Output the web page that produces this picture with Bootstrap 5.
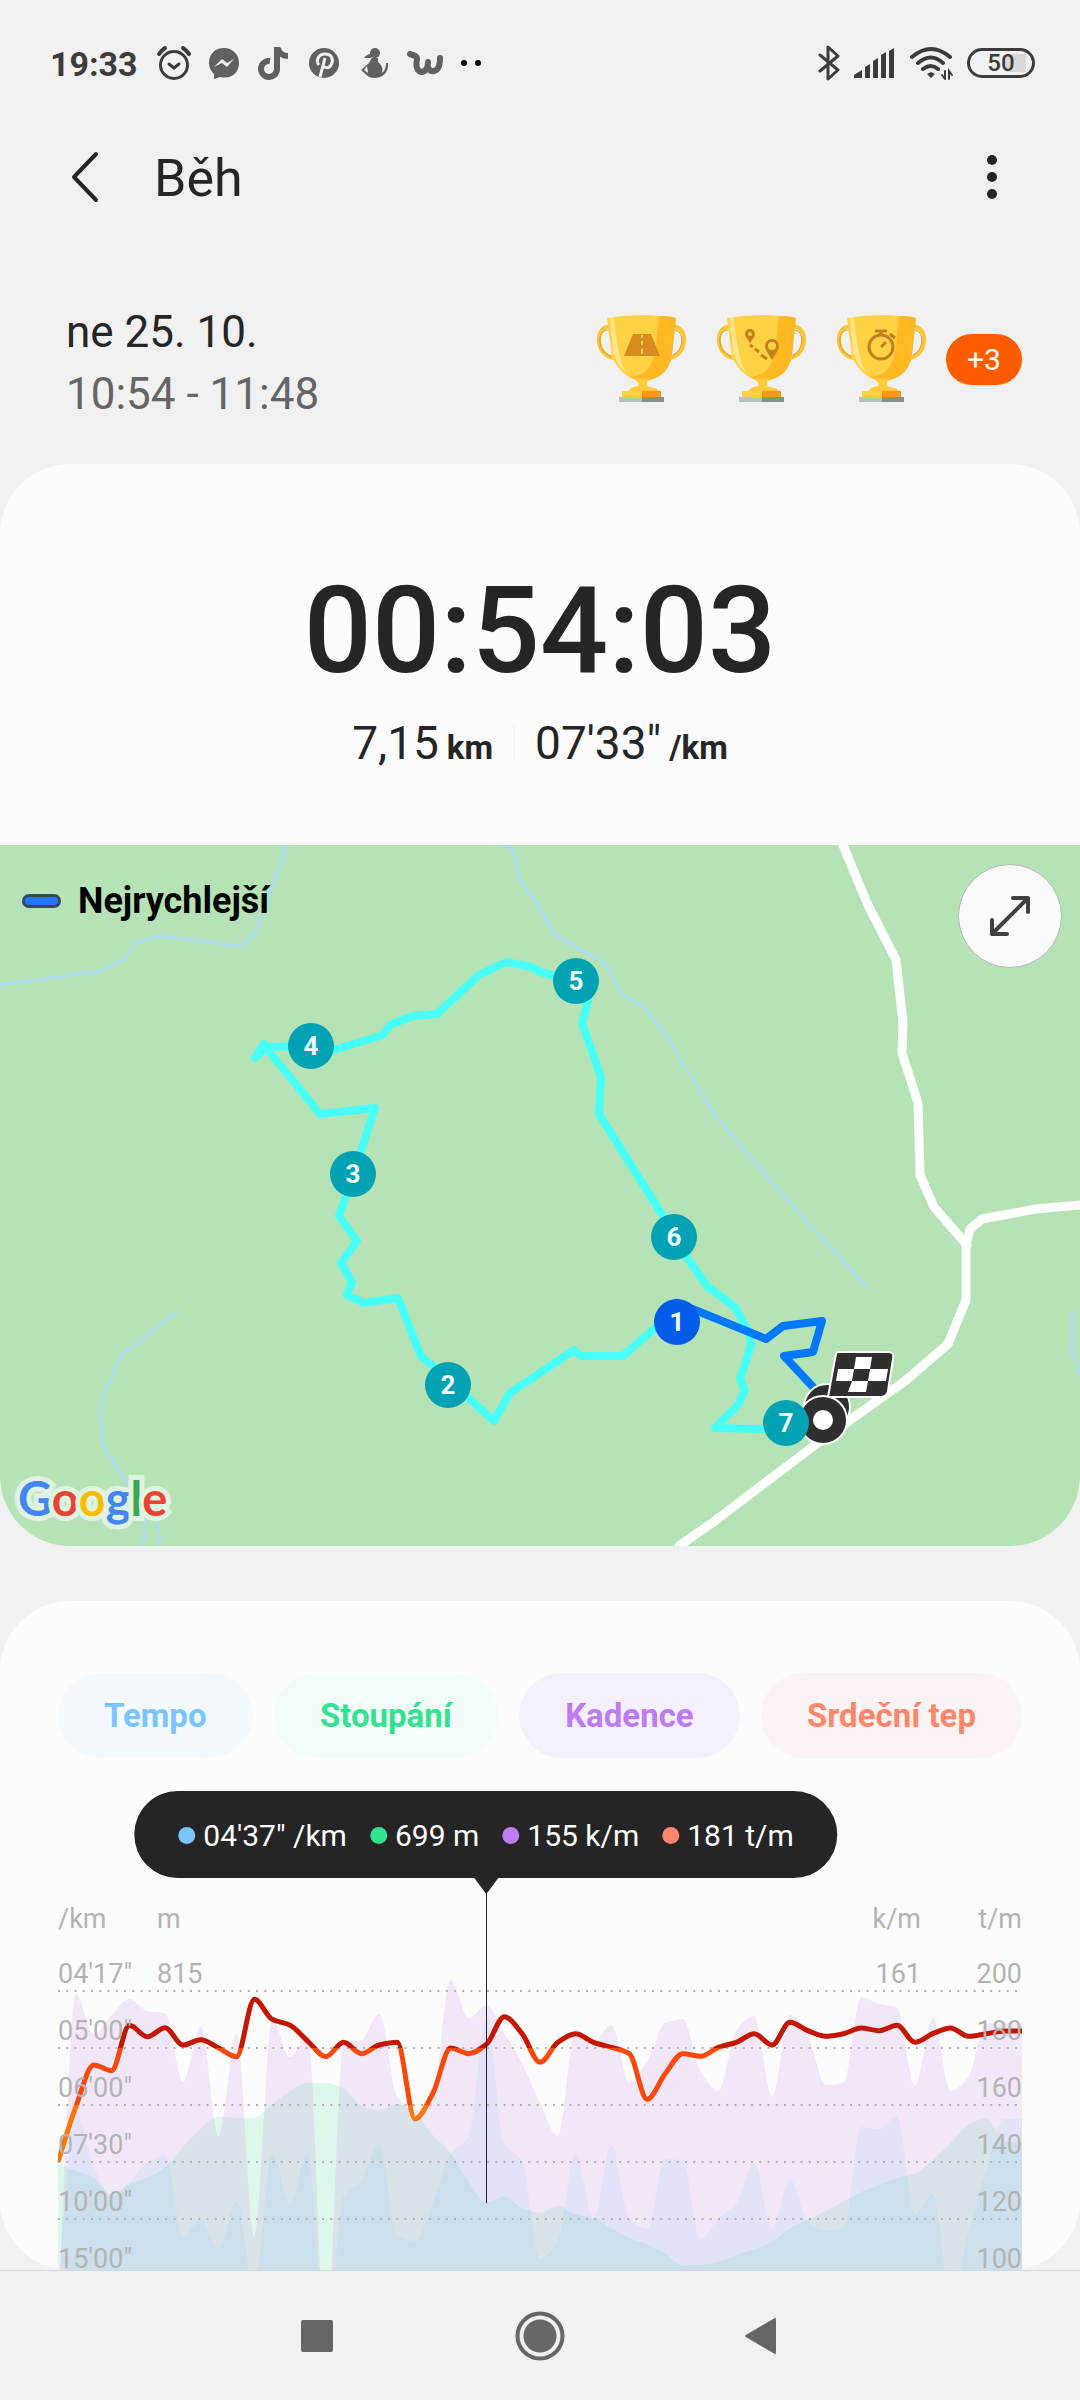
<!DOCTYPE html>
<html lang="cs">
<head>
<meta charset="utf-8">
<meta name="viewport" content="width=device-width, initial-scale=1">
<title>Běh</title>
<link href="https://cdn.jsdelivr.net/npm/bootstrap@5.3.0/dist/css/bootstrap.min.css" rel="stylesheet">
<style>
  body { background: #f1f1f1; color: #252525; font-family: Roboto, "Noto Sans", sans-serif; }
  svg { display: block; }
  .status-bar { height: 126px; padding: 0 45px 0 50px; color: #3c3c3c; }
  .clock { font-size: 34px; font-weight: 700; line-height: 40px; padding: 2px 2px 0 0; color: #3c3c3c; }
  .notif { color: #606060; }
  .signals { gap: 14px; }
  .battery { width: 68px; height: 30px; border: 3px solid #3c3c3c; border-radius: 15px; font-size: 24px; line-height: 24px; font-weight: 500;
    background: linear-gradient(#d9d9d9, #d9d9d9) 36px center / 20px 18px no-repeat; }
  .app-bar { height: 102px; padding: 0 64px; }
  .app-bar h1 { font-size: 52px; line-height: 60px; font-weight: 400; padding: 4px 0 0 46px; }
  .bare { border: 0; background: none; padding: 0; }
  .summary { padding: 69px 58px 43px 66px; font-size: 44px; line-height: 62px; }
  .when { padding-top: 4px; margin-bottom: -4px; }
  .hours { color: #656565; }
  .trophies { gap: 28px; }
  .more-badge { width: 76px; height: 51px; margin-left: -10px; background: #ff5c00; font-size: 30px; font-weight: 400; line-height: 51px; padding: 0; border-radius: 26px; }
  .panel { background: #fcfcfc; border-radius: 70px; overflow: hidden; }
  .result { padding: 107px 0 72px; }
  .timer { font-size: 120px; line-height: 120px; font-weight: 500; }
  .stats { height: 60px; margin-top: 22px; font-size: 46px; line-height: 60px; }
  .stats b { font-size: 33px; line-height: 40px; }
  .rule { width: 2px; height: 36px; margin: 0 20px; background: #f4f4f4; }
  .map-box { background: #b5e3b5; }
  .legend { left: 22px; top: 34px; font-size: 36px; line-height: 44px; font-weight: 700; color: #000; gap: 17px; }
  .legend i { width: 39px; height: 14px; border: 3px solid #35485c; border-radius: 7px; background: #2474ff; }
  .expand { right: 18px; top: 19px; width: 104px; height: 104px; border: 1px solid #b4b8b4; background: #fafafa; }
  .logo { left: 18px; bottom: 18px; font: 700 47px/60px Lato, sans-serif; -webkit-text-stroke: 10px #e0f3e0; paint-order: stroke fill; }
  .pins text { font: 700 26px Roboto, sans-serif; fill: #f2ffff; text-anchor: middle; }
  .details { margin-top: 55px; padding: 72px 58px 0; }
  .chip { height: 85px; border: 0; border-radius: 43px; padding: 0 46px; font-size: 33px; font-weight: 700; }
  .c-tempo { color: #7ac4ff; background: #f4f9fe; }
  .c-climb { color: #31e291; background: #f2fdf9; }
  .c-cadence { color: #bf7cf2; background: #f5f1fc; }
  .c-heart { color: #ff866b; background: #fcf4f4; }
  .chart-box { margin-top: 33px; padding-top: 113px; color: #b3b3b3; font-size: 27px; line-height: 30px; }
  .tip { left: 44.4%; top: 0; transform: translateX(-50%); height: 87px; padding: 2px 44px 0; gap: 23px; border-radius: 44px; background: #252525; color: #fff; font-size: 30px; white-space: nowrap; }
  .tip span { display: flex; align-items: center; gap: 8px; }
  .tip i { width: 17px; height: 17px; border-radius: 50%; background: currentColor; }
  .tip em { font-style: normal; color: #fff; }
  .tip::after { content: ""; position: absolute; left: 50%; top: 100%; margin-left: -12px; border: solid transparent; border-width: 16px 12px 0; border-top-color: #252525; }
  .cursor { left: 44.4%; top: 87px; width: 1px; height: 325px; background: #252525; }
  .unit-a { width: 99px; }
  .unit-b { width: 101px; }
  .plot { display: grid; height: 336px; overflow: hidden; }
  .plot > * { grid-area: 1 / 1; min-width: 0; }
  .axis > div { height: 57px; line-height: 34px; display: flex; align-items: flex-end; }
  .axis > div:last-child { height: 51px; line-height: 22px; }
  .sys-nav { height: 130px; border-top: 1px solid #d6d6d6; gap: 159px; color: #666; }
  .sys-nav button { width: 64px; height: 64px; color: inherit; }
</style>
<script src="https://cdn.jsdelivr.net/npm/bootstrap@5.3.0/dist/js/bootstrap.bundle.min.js"></script>
</head>
<body>
<div class="min-vh-100 d-flex flex-column">

<div class="status-bar d-flex align-items-center justify-content-between">
  <div class="d-flex align-items-center gap-3 notif">
    <span class="clock">19:33</span>
    <svg width="36" height="36" viewBox="0 0 36 36" fill="none" stroke="#3c3c3c" stroke-width="3" stroke-linecap="round"><circle cx="18" cy="20" r="13.5"/><path d="M13 19l5 4 5-4"/><path d="M3 9q3-4 6-6M33 9q-3-4-6-6" stroke-width="4"/></svg>
    <svg width="32" height="34" viewBox="0 0 32 34"><path fill="currentColor" d="M16 2C7 2 1 8 1 17c0 5 2 8 5 11v5l6-2c13 3 19-6 19-14C31 8 24 2 16 2z"/><path fill="#f1f1f1" d="M6 21l8-8 5 4 7-4-7 8-5-4z"/></svg>
    <svg width="36" height="36" viewBox="0 0 36 36" fill="none" stroke="currentColor" stroke-width="6"><path d="M21 2v22a8 8 0 1 1-7-8"/><path d="M22 3c1 6 5 8 10 8"/></svg>
    <svg width="32" height="34" viewBox="0 0 32 34"><circle cx="16" cy="17" r="15" fill="currentColor"/><path d="M11 19c-4-5 0-11 6-11 7 0 9 6 6 11-2 4-7 3-8 0M17 12l-5 19" fill="none" stroke="#f1f1f1" stroke-width="3"/></svg>
    <svg width="34" height="34" viewBox="0 0 34 34" fill="currentColor"><circle cx="19" cy="7" r="5"/><path d="M17 11l5 1v4c5 4 5 8 4 11 3-2 4-6 4-10h2c1 9-5 15-14 15-6 0-8-4-13-8l8-7 2-4zM8 12c2-3 6-5 10-4l-3 4zM11 20l-3 4 4 3z" fill-rule="evenodd"/></svg>
    <svg width="38" height="32" viewBox="0 0 38 32" fill="none" stroke="currentColor" stroke-width="6" stroke-linecap="round" stroke-linejoin="round"><path d="M4 7c4 2 7 1 7 5-1 5-1 12 4 13 5 0 7-5 7-10-1 5 1 10 6 9 5-1 6-7 6-13"/></svg>
    <svg width="24" height="8" viewBox="0 0 24 8" fill="#000"><circle cx="4" cy="4" r="3"/><circle cx="18" cy="4" r="3"/></svg>
  </div>
  <div class="d-flex align-items-center signals">
    <svg width="22" height="36" viewBox="0 0 22 36" fill="none" stroke="currentColor" stroke-width="3" stroke-linejoin="round" stroke-linecap="round"><path d="M2 10l18 15-10 9V2l10 9L2 26"/></svg>
    <svg width="41" height="30" viewBox="0 0 41 30" fill="currentColor"><path d="M0 30v-3l8-5v8zM11 30V19l5-3v14zM19 30V13l5-3v20zM27 30V7l5-3v26zM35 30V3l5-3v30z"/></svg>
    <svg width="44" height="34" viewBox="0 0 44 34" fill="none" stroke="currentColor" stroke-width="4" stroke-linecap="round"><path d="M3 11Q22-5 41 11M9 17Q22 6 34 17M14 23q8-6 15 0"/><path d="M22 26l4 2-4 4-4-4z" fill="currentColor" stroke="none"/><path d="M36 25v8m-3-4l3 4M40 33v-8l3 4" stroke-width="2"/></svg>
    <div class="battery d-flex align-items-center justify-content-center">50</div>
  </div>
</div>

<header class="app-bar d-flex align-items-center">
  <button class="bare" aria-label="Zpět"><svg width="44" height="56" viewBox="0 0 44 56" fill="none" stroke="#252525" stroke-width="4" stroke-linecap="round" stroke-linejoin="round"><path d="M32 5L10 28l22 23"/></svg></button>
  <h1 class="mb-0 flex-grow-1">Běh</h1>
  <button class="bare" aria-label="Další možnosti"><svg width="48" height="56" viewBox="0 0 48 56" fill="#252525"><circle cx="24" cy="11" r="5"/><circle cx="24" cy="28" r="5"/><circle cx="24" cy="45" r="5"/></svg></button>
</header>

<section class="summary d-flex align-items-center justify-content-between">
  <div class="when">
    <div>ne 25. 10.</div>
    <div class="hours">10:54 - 11:48</div>
  </div>
  <div class="d-flex align-items-center trophies">
    <svg class="position-absolute" width="0" height="0" aria-hidden="true"><defs>
      <g id="cup">
        <path d="M17 12C-2 7-2 42 19 43M74 12c19-5 19 30-2 31" fill="none" stroke="#fcc433" stroke-width="4"/>
        <path d="M13 15C0 14 1 38 15 41M78 15c10 0 11 19-1 25" fill="none" stroke="#d99a2c" stroke-width="1"/>
        <path d="M11 3Q45-3 80 3L76 39q-2 19-24 27-6 1-6 1-22-5-30-26z" fill="#ffd246"/>
        <path d="M63 1q13 0 17 2L76 39q-3 23-24 26-8 1-19-3 24 0 27-32z" fill="#ffb722"/>
        <path d="M14 2l4 0q2 36 12 56-9-7-13-22z" fill="#ffe68e"/>
        <path d="M38 64h16q-6 5-1 8 10 1 11 6H32q0-5 10-7 3-2-4-7z" fill="#ffcb38"/>
        <path d="M26 76h20v7H26z" fill="#ffd246"/><path d="M46 76h19v7H46z" fill="#f49a1e"/>
        <path d="M23 82h23v5H23z" fill="#b9c2bd"/><path d="M46 82h22v5H46z" fill="#868f8a"/>
      </g></defs></svg>
    <svg width="92" height="88" viewBox="0 0 92 88"><use href="#cup"/><path d="M28 41l9-22h18l9 22z" fill="#d68a1f"/><path d="M46 20v3m0 3v4m0 4v5" stroke="#ffd246" stroke-width="2"/></svg>
    <svg width="92" height="88" viewBox="0 0 92 88"><use href="#cup"/><g fill="none" stroke="#c4801e" stroke-width="3"><circle cx="34" cy="19" r="3.500"/><circle cx="56" cy="31" r="5.500"/><path d="M34 30l3 2m2 2l4 3m2 3l6 4"/></g><path d="M30 22l4 6 4-6zM50 35l6 10 6-10q-6 4-12 0z" fill="#c4801e"/></svg>
    <svg width="92" height="88" viewBox="0 0 92 88"><use href="#cup"/><g fill="none" stroke="#c4801e" stroke-width="3"><circle cx="45" cy="32" r="12"/><path d="M39 16h12M45 16v5M54 19l5 4M45 32l5-5"/></g></svg>
    <span class="badge more-badge">+3</span>
  </div>
</section>

<main>
  <section class="panel">
    <div class="result text-center">
      <div class="timer">00:54:03</div>
      <div class="stats d-flex justify-content-center align-items-center">
        <div class="d-flex align-items-baseline gap-2"><span>7,15</span><b>km</b></div>
        <div class="rule"></div>
        <div class="d-flex align-items-baseline gap-2"><span>07'33"</span><b>/km</b></div>
      </div>
    </div>
    <div class="map-box position-relative">
      <svg width="100%" viewBox="0 0 1080 701" fill="none" stroke-linejoin="round" stroke-linecap="round" role="img" aria-label="Mapa trasy">
        <g stroke="#addbf0" stroke-width="3">
          <path d="M0 140L101 126 125 113 134 98 159 91 240 101 254 90 287 0"/>
          <path d="M504 0L513 5 521 37 540 63 555 90 605 118 622 150 645 163 666 190 714 269 781 348 867 442"/>
          <path d="M177 466L121 511 101 556 102 598 127 639 144 669 145 692 139 701M144 655L153 671 158 683 160 701M1072 464V506L1080 529"/>
        </g>
        <g stroke="#fff" stroke-width="9">
          <path d="M843 0L867 58 896 115 903 178 902 208 918 258 920 330 934 362 967 400"/>
          <path d="M1080 360L1036 364 982 374 970 384 966 400 966 455 948 499 905 536 850 575 815 600 712 678 679 701"/>
        </g>
        <path stroke="#47fff6" stroke-width="8" d="M786 584H764L715 583 738 560 745 545 740 534 751 501 749 488 735 462 707 441 688 414 663 371 599 269 601 232 582 178 588 155 576 136 540 127 532 122 506 117 479 130 437 169 413 171 390 180 383 190 334 205 311 201 268 202 255 213 264 199 272 210 320 269 375 263 360 309 339 371 357 396 341 418 352 437 347 450 364 458 398 453 421 511 434 522 494 576 510 548 540 528 574 505 581 511H623L655 483 677 477"/>
        <path stroke="#0078ff" stroke-width="8" d="M677 458L695 465 766 494 783 481 822 476 813 507 784 511 814 543"/>
        <g stroke="#fff" stroke-width="2" fill="#2f2f2f">
          <circle cx="827" cy="562" r="23"/>
          <path d="M838 507h50q7 0 5 7l-5 32q-1 6-7 6h-53l7-38q1-7 3-7z"/>
          <circle cx="823" cy="575" r="24"/>
          <circle cx="823" cy="575" r="10" fill="#fff" stroke="none"/>
        </g>
        <path fill="#fff" d="M856 512h16l-2 12h-16zM838 524h16l-2 12h-16zM870 524h18l-2 12h-18zM852 536h16l-2 11h-18z"/>
        <g class="pins">
          <g fill="#00a2b3"><circle cx="448" cy="540" r="23"/><circle cx="353" cy="329" r="23"/><circle cx="311" cy="201" r="23"/><circle cx="576" cy="136" r="23"/><circle cx="674" cy="392" r="23"/><circle cx="786" cy="578" r="23"/></g>
          <circle cx="677" cy="477" r="23" fill="#055cea"/>
          <text x="677" y="486">1</text><text x="448" y="549">2</text><text x="353" y="338">3</text><text x="311" y="210">4</text><text x="576" y="145">5</text><text x="674" y="401">6</text><text x="786" y="587">7</text>
        </g>
      </svg>
      <div class="legend position-absolute d-flex align-items-center"><i></i><span>Nejrychlejší</span></div>
      <button class="expand position-absolute rounded-circle d-flex align-items-center justify-content-center" aria-label="Zvětšit mapu"><svg width="44" height="44" viewBox="0 0 44 44" fill="none" stroke="#404040" stroke-width="4" stroke-linecap="round" stroke-linejoin="round"><path d="M4 40L40 4M25 4h15v14M4 26v14h15"/></svg></button>
      <div class="logo position-absolute"><span style="color:#4285f4">G</span><span style="color:#ea4335">o</span><span style="color:#fbbc05">o</span><span style="color:#4285f4">g</span><span style="color:#34a853">l</span><span style="color:#ea4335">e</span></div>
    </div>
  </section>

  <section class="panel details">
    <div class="d-flex justify-content-between">
      <button class="chip c-tempo">Tempo</button>
      <button class="chip c-climb">Stoupání</button>
      <button class="chip c-cadence">Kadence</button>
      <button class="chip c-heart">Srdeční tep</button>
    </div>
    <div class="chart-box position-relative">
      <div class="d-flex">
        <span class="unit-a">/km</span><span>m</span>
        <span class="ms-auto">k/m</span><span class="unit-b text-end">t/m</span>
      </div>
      <div class="plot">
        <svg width="100%" height="336" viewBox="0 0 964 336" preserveAspectRatio="none" fill="none">
          <defs><linearGradient id="zones" gradientUnits="userSpaceOnUse" x1="0" y1="0" x2="0" y2="336">
            <stop offset=".339" stop-color="#c41600"/><stop offset=".339" stop-color="#fa480a"/>
            <stop offset=".509" stop-color="#fa480a"/><stop offset=".509" stop-color="#fd750c"/>
          </linearGradient></defs>
          <path id="climb" fill="#30e090" fill-opacity=".15"/>
          <path id="cadence" fill="#c180e8" fill-opacity=".17"/>
          <path id="tempo" fill="#78c8ff" fill-opacity=".125"/>
          <path stroke="#b3b3b3" stroke-width="2" stroke-dasharray="2 6.250" d="M0 57H964M0 114H964M0 171H964M0 228H964M0 285H964"/>
          <path id="heart" stroke="url(#zones)" stroke-width="5" stroke-linejoin="round"/>
        </svg>
        <div class="axis">
          <div><span class="unit-a">04'17"</span><span>815</span><span class="ms-auto">161</span><span class="unit-b text-end">200</span></div>
          <div><span>05'00"</span><span class="ms-auto">180</span></div>
          <div><span>06'00"</span><span class="ms-auto">160</span></div>
          <div><span>07'30"</span><span class="ms-auto">140</span></div>
          <div><span>10'00"</span><span class="ms-auto">120</span></div>
          <div><span>15'00"</span><span class="ms-auto">100</span></div>
        </div>
      </div>
      <div class="cursor position-absolute"></div>
      <div class="tip position-absolute d-flex align-items-center">
        <span style="color:#7ac4ff"><i></i><em>04'37" /km</em></span>
        <span style="color:#31e291"><i></i><em>699 m</em></span>
        <span style="color:#c07cf2"><i></i><em>155 k/m</em></span>
        <span style="color:#ff866b"><i></i><em>181 t/m</em></span>
      </div>
    </div>
  </section>
</main>

<nav class="sys-nav d-flex align-items-center justify-content-center mt-auto">
  <button class="bare d-flex align-items-center justify-content-center" aria-label="Přehled"><svg width="32" height="32"><rect width="32" height="32" rx="2" fill="currentColor"/></svg></button>
  <button class="bare d-flex align-items-center justify-content-center" aria-label="Domů"><svg width="50" height="50" viewBox="0 0 50 50"><circle cx="25" cy="25" r="22.500" fill="none" stroke="currentColor" stroke-width="4"/><circle cx="25" cy="25" r="16.500" fill="currentColor"/></svg></button>
  <button class="bare d-flex align-items-center justify-content-center" aria-label="Zpět"><svg width="36" height="38" viewBox="0 0 36 38" fill="currentColor" stroke="currentColor" stroke-width="2" stroke-linejoin="round"><path d="M1 19L30 2v34z"/></svg></button>
</nav>
</div>

<script>
  // One sample per minute; values are thirds of a pixel from the top of the plot.
  const series = {
    heart: [683,518,393,410,274,308,281,333,317,342,368,196,256,274,322,368,325,359,333,325,555,478,342,359,331,248,299,385,325,299,325,340,359,496,420,359,367,340,325,299,333,265,290,307,299,282,290,274,325,299,282,307,299,291,291],
    cadence: [1138,181,300,243,195,231,238,443,278,606,300,906,258,370,303,1238,328,318,239,488,528,478,138,253,214,298,388,508,606,286,323,274,446,383,268,255,413,470,288,246,488,243,303,453,446,190,210,221,456,251,471,428,268,268,268],
    tempo: [1088,538,698,788,743,686,663,906,858,944,801,1068,656,810,653,1238,788,738,628,908,921,808,658,608,256,628,683,973,918,656,853,633,853,885,676,678,916,853,808,688,885,736,863,890,885,578,586,546,841,780,1088,898,708,555,555],
    climb: [690,711,731,783,751,731,700,638,583,548,551,551,511,470,446,446,463,515,528,510,538,603,658,743,806,788,821,836,816,841,851,883,911,931,958,995,993,983,963,946,923,883,858,831,803,773,753,731,718,678,628,573,552,624,624]
  };
  // Monotone cubic curve through evenly spaced points.
  function curve(values) {
    const y = values.map(v => v / 3), n = y.length, h = 964 / (n - 1);
    const d = y.slice(1).map((v, i) => v - y[i]);
    const m = y.map((v, i) => {
      if (i === 0 || i === n - 1) return i ? d[n - 2] : d[0];
      const a = d[i - 1], b = d[i];
      return a * b <= 0 ? 0 : 2 * a * b / (a + b);
    });
    let path = 'M0 ' + y[0].toFixed(1);
    for (let i = 1; i < n; i++) {
      path += 'C' + [(i - 2 / 3) * h, y[i - 1] + m[i - 1] / 3, (i - 1 / 3) * h, y[i] - m[i] / 3, i * h, y[i]].map(v => v.toFixed(1)).join(' ');
    }
    return path;
  }
  for (const name in series) {
    document.getElementById(name).setAttribute('d', curve(series[name]) + (name === 'heart' ? '' : 'V420H0Z'));
  }
</script>
</body>
</html>
